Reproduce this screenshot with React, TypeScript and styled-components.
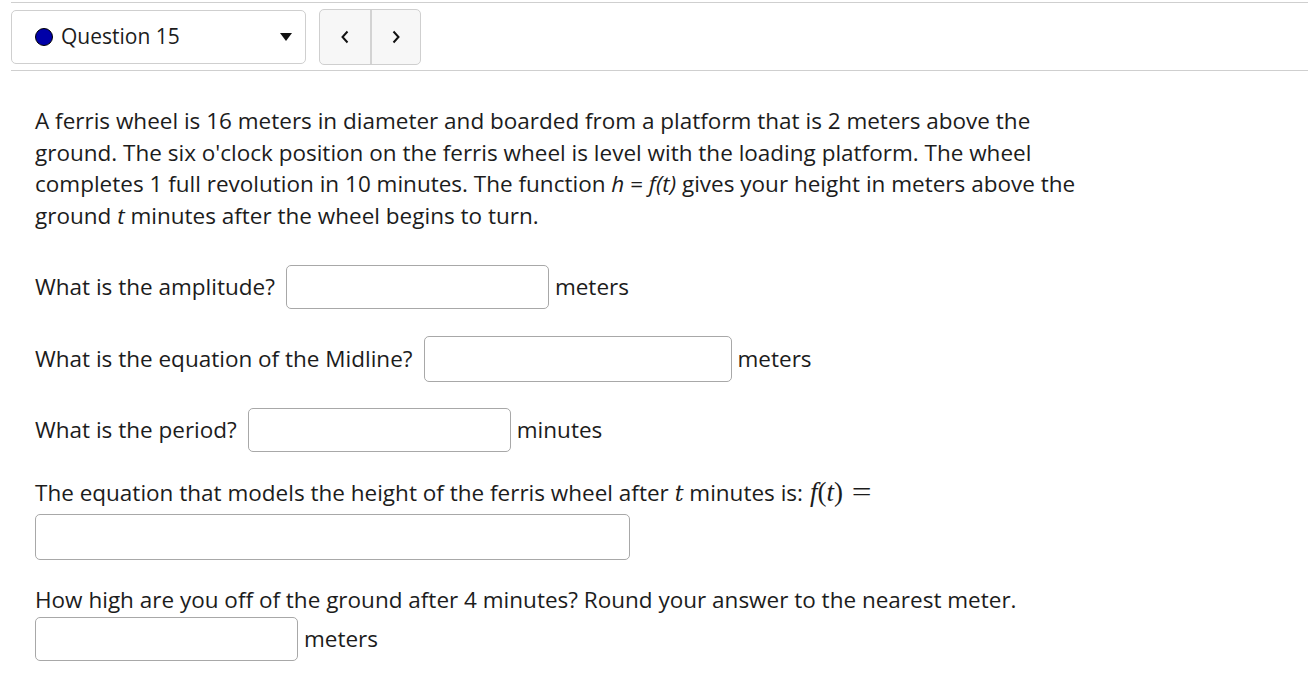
import React from "react";
import styled, { createGlobalStyle } from "styled-components";

const GlobalStyle = createGlobalStyle`
  body {
    margin: 0;
    background: #fff;
    font-family: "Open Sans", "Liberation Sans", sans-serif;
    color: #1c1c1c;
  }
`;

const Page = styled.div`
  padding-left: 11px;
  padding-top: 2px;
`;

const Header = styled.div`
  border-top: 1px solid #cfcfcf;
  border-bottom: 1px solid #cfcfcf;
  padding: 6px 0 5px;
  display: flex;
  align-items: center;
`;

const Select = styled.div`
  box-sizing: border-box;
  width: 295px;
  height: 54px;
  border: 1px solid #cfcfcf;
  border-radius: 5px;
  display: flex;
  align-items: center;
  padding: 0 12px 0 23px;
  font-size: 21px;
  line-height: 1;
`;

const Dot = styled.span`
  width: 16px;
  height: 16px;
  border-radius: 50%;
  background: #0000a8;
  border: 1.5px solid #000;
  margin-right: 8px;
  flex-shrink: 0;
`;

const SelectLabel = styled.span`
  flex: 1;
  padding-bottom: 2px;
`;

const Caret = styled.span`
  width: 0;
  height: 0;
  border-left: 6px solid transparent;
  border-right: 6px solid transparent;
  border-top: 8px solid #111;
  margin-right: 1px;
`;

const NavGroup = styled.div`
  margin-left: 13px;
  display: flex;
  height: 54px;
  border: 1px solid #cfcfcf;
  border-radius: 5px;
  background: #f7f7f7;
  overflow: hidden;
`;

const NavButton = styled.button<{ $divider?: boolean }>`
  width: 50px;
  height: 100%;
  border: none;
  background: transparent;
  border-left: ${(p) => (p.$divider ? "2px solid #d3d3d3" : "none")};
  display: flex;
  align-items: center;
  justify-content: center;
  padding: 0;
`;

const Content = styled.div`
  padding: 34px 24px 0;
  font-size: 22.5px;
  line-height: 31.7px;
`;

const Paragraph = styled.p`
  margin: 0;
  white-space: nowrap;
`;

const Row = styled.div<{ $top: number }>`
  display: flex;
  align-items: center;
  margin-top: ${(p) => p.$top}px;
`;

const Label = styled.span`
  margin-right: 11px;
`;

const Unit = styled.span`
  margin-left: 6px;
`;

const Input = styled.input<{ $w: number; $h?: number }>`
  box-sizing: border-box;
  width: ${(p) => p.$w}px;
  height: ${(p) => p.$h ?? 44}px;
  border: 1px solid #a8a8a8;
  border-radius: 5px;
  background: #fff;
  font-size: 20px;
  padding: 0 8px;
`;

const Text = styled.div<{ $top: number }>`
  margin-top: ${(p) => p.$top}px;
`;

const MathVar = styled.span`
  font-family: "DejaVu Serif", "Liberation Serif", serif;
  font-style: italic;
  font-size: 22px;
`;

const MathExpr = styled.span`
  font-family: "Liberation Serif", "DejaVu Serif", serif;
  font-size: 27px;
  margin-left: 7px;
  i {
    font-style: italic;
  }
`;

const Equals = styled.span`
  margin-left: 11px;
  display: inline-block;
  transform: scaleX(1.3);
`;

const Chevron = ({ dir }: { dir: "l" | "r" }) => (
  <svg width="10" height="14" viewBox="0 0 10 14">
    <path
      d={dir === "l" ? "M7.5 1.5 L2.5 7 L7.5 12.5" : "M2.5 1.5 L7.5 7 L2.5 12.5"}
      fill="none"
      stroke="#111"
      strokeWidth="2"
    />
  </svg>
);

export default function App() {
  return (
    <>
      <GlobalStyle />
      <Page>
        <Header>
          <Select>
            <Dot />
            <SelectLabel>Question 15</SelectLabel>
            <Caret />
          </Select>
          <NavGroup>
            <NavButton>
              <Chevron dir="l" />
            </NavButton>
            <NavButton $divider>
              <Chevron dir="r" />
            </NavButton>
          </NavGroup>
        </Header>
        <Content>
          <Paragraph>
            A ferris wheel is 16 meters in diameter and boarded from a platform that is 2 meters above the
            <br />
            ground. The six o'clock position on the ferris wheel is level with the loading platform. The wheel
            <br />
            completes 1 full revolution in 10 minutes. The function <i>h</i> = <i>f(t)</i> gives your height in
            meters above the
            <br />
            ground <i>t</i> minutes after the wheel begins to turn.
          </Paragraph>
          <Row $top={33}>
            <Label>What is the amplitude?</Label>
            <Input $w={263} />
            <Unit>meters</Unit>
          </Row>
          <Row $top={27}>
            <Label>What is the equation of the Midline?</Label>
            <Input $w={308} $h={46} />
            <Unit>meters</Unit>
          </Row>
          <Row $top={26}>
            <Label>What is the period?</Label>
            <Input $w={263} />
            <Unit>minutes</Unit>
          </Row>
          <Text $top={25}>
            The equation that models the height of the ferris wheel after <MathVar>t</MathVar> minutes is:
            <MathExpr>
              <i>f</i>(<i>t</i>)<Equals>=</Equals>
            </MathExpr>
          </Text>
          <Row $top={4}>
            <Input $w={595} $h={46} />
          </Row>
          <Text $top={24}>How high are you off of the ground after 4 minutes? Round your answer to the nearest meter.</Text>
          <Row $top={2}>
            <Input $w={263} />
            <Unit>meters</Unit>
          </Row>
        </Content>
      </Page>
    </>
  );
}
